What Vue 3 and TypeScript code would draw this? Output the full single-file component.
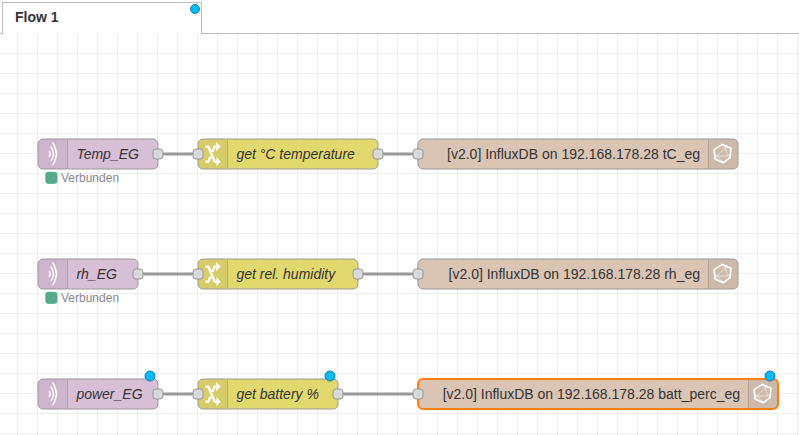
<script setup lang="ts">
type Kind = 'mqtt' | 'change' | 'influx'

interface FlowNode {
  id: string
  kind: Kind
  label: string
  x: number
  y: number
  w: number
  status?: string
  changed?: boolean
  selected?: boolean
}

const nodes: FlowNode[] = [
  { id: 'a1', kind: 'mqtt', label: 'Temp_EG', x: 38, y: 139, w: 120, status: 'Verbunden' },
  { id: 'a2', kind: 'change', label: 'get °C temperature', x: 198, y: 139, w: 180 },
  { id: 'a3', kind: 'influx', label: '[v2.0] InfluxDB on 192.168.178.28 tC_eg', x: 418, y: 139, w: 320 },
  { id: 'b1', kind: 'mqtt', label: 'rh_EG', x: 38, y: 259, w: 100, status: 'Verbunden' },
  { id: 'b2', kind: 'change', label: 'get rel. humidity', x: 198, y: 259, w: 160 },
  { id: 'b3', kind: 'influx', label: '[v2.0] InfluxDB on 192.168.178.28 rh_eg', x: 418, y: 259, w: 320 },
  { id: 'c1', kind: 'mqtt', label: 'power_EG', x: 38, y: 379, w: 120, changed: true },
  { id: 'c2', kind: 'change', label: 'get battery %', x: 198, y: 379, w: 140, changed: true },
  { id: 'c3', kind: 'influx', label: '[v2.0] InfluxDB on 192.168.178.28 batt_perc_eg', x: 418, y: 379, w: 360, changed: true, selected: true },
]

const wires = nodes
  .filter((n) => n.kind !== 'influx')
  .map((n) => {
    const target = nodes[nodes.indexOf(n) + 1]
    return { id: n.id, x1: n.x + n.w, x2: target.x, y: n.y + 15 }
  })
</script>

<template>
  <div class="workspace">
    <header class="tabs">
      <div class="tab">
        <span class="tab-label">Flow 1</span>
        <svg class="tab-changed" width="12" height="12" viewBox="0 0 12 12"><circle class="changed" cx="6" cy="6" r="4.5" /></svg>
      </div>
    </header>
    <svg class="canvas" width="799" height="401" viewBox="0 34 799 401">
      <defs>
        <pattern id="grid" x="17" y="53" width="20" height="20" patternUnits="userSpaceOnUse">
          <path class="grid-line" d="M0 .5H20M.5 0V20" />
        </pattern>
      </defs>
      <rect class="backdrop" y="34" width="799" height="401" />
      <rect y="34" width="799" height="401" fill="url(#grid)" />
      <line v-for="w in wires" :key="w.id" class="wire" :x1="w.x1" :x2="w.x2" :y1="w.y" :y2="w.y" />
      <g v-for="n in nodes" :key="n.id" :class="['node', n.kind, { selected: n.selected }]" :transform="`translate(${n.x} ${n.y})`">
        <rect class="body" :width="n.w" height="30" rx="5" />
        <template v-if="n.kind !== 'influx'">
          <path class="shade" d="M5 .5H30V29.5H5Q.5 29.5 .5 25V5Q.5 .5 5 .5Z" />
          <path class="divider" d="M29.5 1V29" />
          <g v-if="n.kind === 'mqtt'" class="waves">
            <path d="M10.9 12.2Q13.2 15 10.9 18" />
            <path d="M12.8 7.5Q17.8 15 12.8 22.3" />
            <path d="M14.8 3.6Q22 15 14.8 26.2" />
          </g>
          <g v-else class="shuffle">
            <path d="M7.4 7.6H10.4L16.6 22.6H19.6M7.4 22.6H10.4L12.4 17.6M14.4 12.8L16.6 7.6H19.6" />
            <path class="arrow" d="M18.4 2.9L22.6 7.6L18.4 12.3ZM18.4 17.9L22.6 22.6L18.4 27.3Z" />
          </g>
          <text class="label" x="38.4" y="20">{{ n.label }}</text>
          <rect class="port" :x="n.w - 5" y="10" width="10" height="10" rx="3" />
        </template>
        <g v-else>
          <g :transform="`translate(${n.w - 30} 0)`">
            <path class="shade" d="M0 .5H25Q29.5 .5 29.5 5V25Q29.5 29.5 25 29.5H0Z" />
            <path class="divider" d="M.5 1V29" />
            <path class="gem" d="M14.2 5.4L22.9 9.2L22 18.6L15.2 23.6L7.3 20.2L6.1 10.6Z" />
            <path class="facets" d="M17 8.7L8.7 17L20.2 17ZM14.2 5.4L17 8.7L22.9 9.2M8.7 17L7.3 20.2M20.2 17L22 18.6M8.7 17L15.2 23.6" />
          </g>
          <text class="label end" :x="n.w - 38" y="20">{{ n.label }}</text>
        </g>
        <rect v-if="n.kind !== 'mqtt'" class="port" x="-5" y="10" width="10" height="10" rx="3" />
        <circle v-if="n.changed" class="changed" :cx="n.w - 8" cy="-3" r="5" />
        <g v-if="n.status">
          <rect class="status-dot" x="7.9" y="33.3" width="11" height="11" rx="2" />
          <text class="status" x="23" y="43">{{ n.status }}</text>
        </g>
      </g>
    </svg>
  </div>
</template>

<style>
body {
  margin: 0;
  overflow: hidden;
}
</style>

<style scoped>
.workspace {
  width: 799px;
  height: 435px;
  background: #fff;
  font-family: 'Liberation Sans', Arial, sans-serif;
}
.tabs {
  display: flex;
  height: 34px;
  box-sizing: border-box;
  padding: 2px 0 0 2px;
  background: linear-gradient(#bbb, #bbb) 0 33px / 100% 1px no-repeat;
}
.tab {
  display: flex;
  justify-content: space-between;
  width: 200px;
  height: 32px;
  box-sizing: border-box;
  padding: 0 0 0 12px;
  border: 1px solid #bbb;
  border-bottom: 0;
  background: #fff;
}
.tab-label {
  font-size: 14px;
  font-weight: bold;
  line-height: 29px;
  color: #333;
}
.canvas {
  display: block;
}
.backdrop {
  fill: #fff;
}
.grid-line {
  fill: none;
  stroke: #eee;
}
.wire {
  stroke: #999;
  stroke-width: 3;
}
.body {
  stroke: #999;
}
.mqtt .body {
  fill: #d8bfd8;
}
.change .body {
  fill: #e2d96e;
}
.influx .body {
  fill: #dac4b4;
}
.selected .body {
  stroke: #ff7f0e;
  stroke-width: 2;
}
.shade {
  fill: #000;
  fill-opacity: 0.05;
}
.divider {
  fill: none;
  stroke: #000;
  stroke-opacity: 0.13;
}
.waves {
  fill: none;
  stroke: #fff;
  stroke-width: 1.5;
}
.shuffle {
  fill: none;
  stroke: #fff;
  stroke-width: 2.4;
}
.arrow {
  fill: #fff;
  stroke: none;
}
.gem {
  fill: none;
  stroke: #fff;
  stroke-width: 1.7;
  stroke-linejoin: round;
}
.facets {
  fill: none;
  stroke: #fff;
  stroke-width: 0.7;
  stroke-opacity: 0.75;
}
.port {
  fill: #d9d9d9;
  stroke: #999;
}
.label {
  font-size: 14px;
  fill: #333;
}
.mqtt .label,
.change .label {
  font-style: italic;
}
.end {
  text-anchor: end;
}
.changed {
  fill: #00bcff;
  stroke: #1b78a8;
}
.status-dot {
  fill: #5a8;
  stroke: #5a8;
}
.status {
  font-size: 12px;
  fill: #888;
}
</style>
